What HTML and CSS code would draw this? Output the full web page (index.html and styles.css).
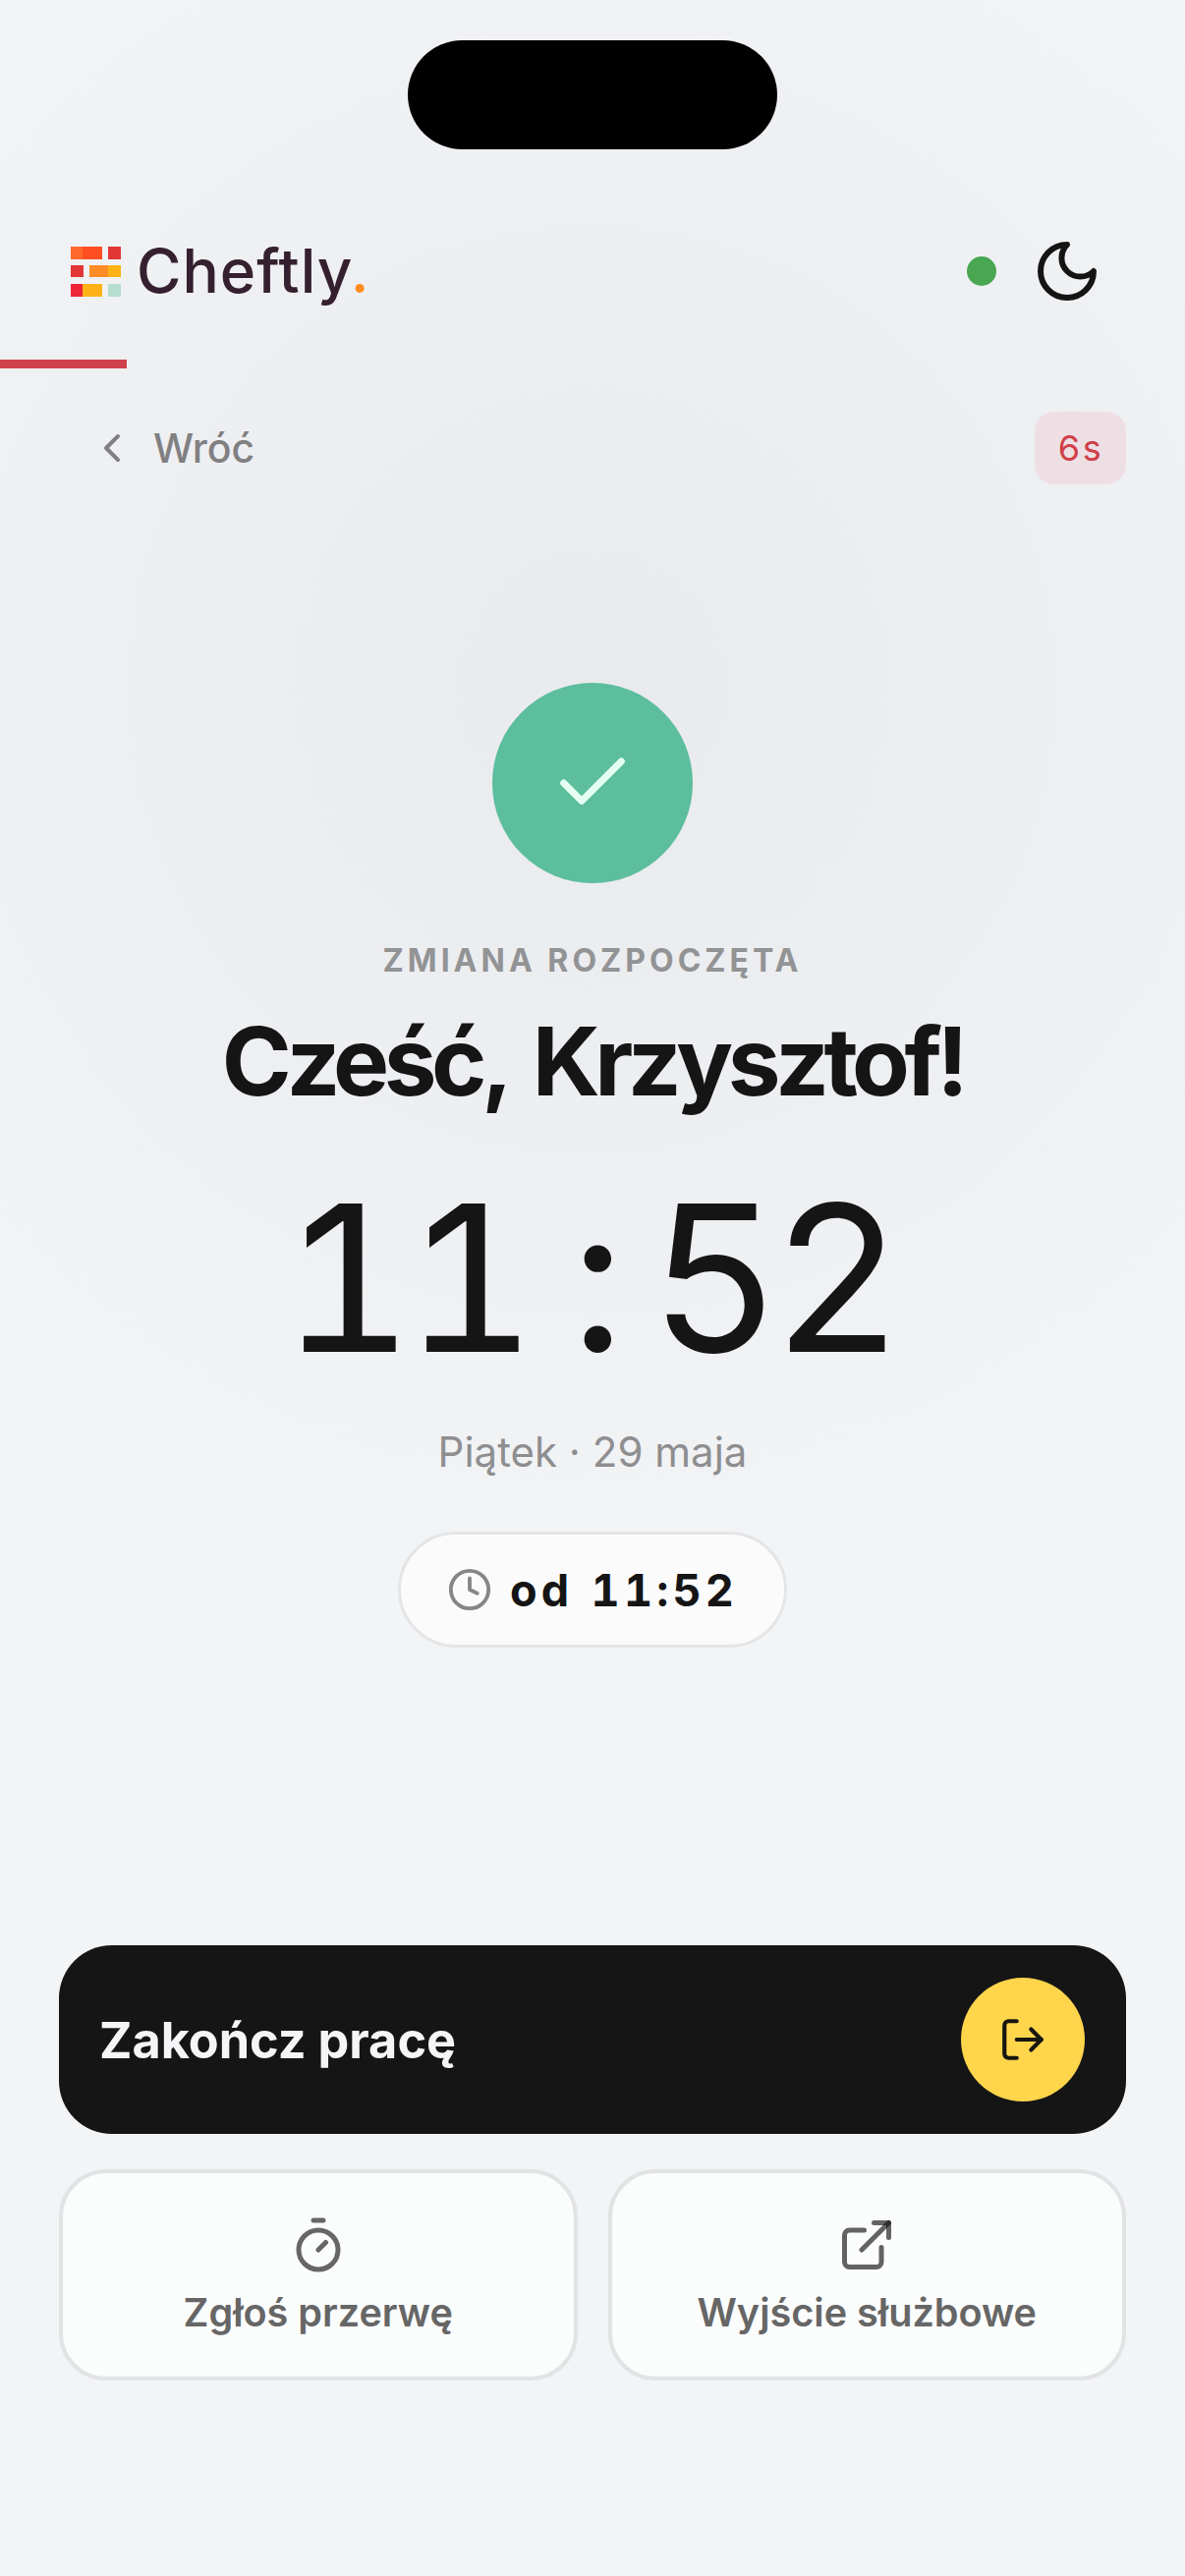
FILE: index.html
```html
<!DOCTYPE html>
<html lang="pl">
<head>
  <meta charset="utf-8">
  <title>Cheftly</title>
  <link rel="stylesheet" href="styles.css">
</head>
<body>
  <div class="page">
    <div class="island"></div>

    <!-- Logo and status -->
    <div class="topbar">
      <div class="brand">
        <svg class="brand-mark" width="51" height="51" viewBox="0 0 51 51">
          <rect x="0" y="0" width="12" height="13" fill="#ff6a2b"/>
          <rect x="12" y="0" width="20" height="13" fill="#ff4f22"/>
          <rect x="38" y="0" width="13" height="13" fill="#e23535"/>
          <rect x="0" y="19" width="13" height="12" fill="#e23535"/>
          <rect x="19" y="19" width="19" height="12" fill="#ff8c24"/>
          <rect x="38" y="19" width="13" height="12" fill="#ffb217"/>
          <rect x="0" y="38" width="12" height="13" fill="#ee2538"/>
          <rect x="12" y="38" width="20" height="13" fill="#ffb217"/>
          <rect x="38" y="38" width="13" height="13" fill="#b5decf"/>
        </svg>
        <span class="brand-name">Cheftly<span class="brand-dot">.</span></span>
      </div>
      <div class="status">
        <span class="status-dot"></span>
        <svg class="icon" width="72" height="72" viewBox="0 0 24 24" stroke="#141414" stroke-width="2">
          <path d="M12 3a6 6 0 0 0 9 9 9 9 0 1 1-9-9Z"/>
        </svg>
      </div>
    </div>

    <div class="progress"><div class="progress-fill" style="width: 129px"></div></div>

    <div class="nav-row">
      <a class="back">
        <svg class="icon" width="48" height="48" viewBox="0 0 24 24" stroke="#808082" stroke-width="2">
          <path d="m15 18-6-6 6-6"/>
        </svg>
        <span>Wróć</span>
      </a>
      <span class="countdown">6s</span>
    </div>

    <!-- Greeting -->
    <div class="hero">
      <div class="check">
        <svg class="icon" width="88" height="88" viewBox="0 0 24 24" stroke="#e6fff3" stroke-width="1.9">
          <path d="M20 6 9 17l-5-5"/>
        </svg>
      </div>
      <div class="eyebrow">ZMIANA ROZPOCZĘTA</div>
      <h1 class="greeting">Cześć, Krzysztof!</h1>
      <div class="clock">11<span class="clock-sep">:</span>52</div>
      <div class="date">Piątek · 29 maja</div>
      <div class="since">
        <svg class="icon" width="46" height="46" viewBox="0 0 24 24" stroke="#868686" stroke-width="2">
          <circle cx="12" cy="12" r="10"/>
          <path d="M12 6v6l4 2"/>
        </svg>
        <span>od 11:52</span>
      </div>
    </div>

    <!-- Actions -->
    <div class="actions">
      <button class="end-shift" type="button">
        <span>Zakończ pracę</span>
        <span class="end-icon">
          <svg class="icon" width="50" height="50" viewBox="0 0 24 24" stroke="#171510" stroke-width="2">
            <path d="M9 21H5a2 2 0 0 1-2-2V5a2 2 0 0 1 2-2h4"/>
            <path d="m16 17 5-5-5-5"/>
            <path d="M21 12H9"/>
          </svg>
        </span>
      </button>
      <div class="action-grid">
        <button class="action" type="button">
          <svg class="icon" width="60" height="60" viewBox="0 0 24 24" stroke="#666" stroke-width="2">
            <path d="M10 2h4"/>
            <path d="m12 14 3-3"/>
            <circle cx="12" cy="14" r="8"/>
          </svg>
          <span>Zgłoś przerwę</span>
        </button>
        <button class="action" type="button">
          <svg class="icon icon-layered" width="60" height="60" viewBox="0 0 24 24" stroke="#111" stroke-width="2">
            <path d="M15 3h6v6"/>
            <path d="M10 14 21 3"/>
            <path d="M18 13v6a2 2 0 0 1-2 2H5a2 2 0 0 1-2-2V8a2 2 0 0 1 2-2h6"/>
          </svg>
          <span>Wyjście służbowe</span>
        </button>
      </div>
    </div>
  </div>
</body>
</html>
```

FILE: styles.css
```css
* {
  box-sizing: border-box;
}

html, body {
  margin: 0;
  padding: 0;
}

body {
  font-family: "Inter", "Liberation Sans", sans-serif;
  color: #151515;
  background: #f3f4f6;
}

.page {
  height: 2622px;
  overflow: hidden;
  background: radial-gradient(circle at 603px 700px, #e9eaed 0, #f3f4f6 950px);
}

.icon {
  display: block;
  flex: none;
  fill: none;
  stroke-linecap: round;
  stroke-linejoin: round;
}

.icon-layered path {
  stroke-opacity: 0.65;
}

.island {
  width: 376px;
  height: 111px;
  margin: 41px auto 0;
  border-radius: 56px;
  background: #000;
}

/* Top bar */
.topbar {
  display: flex;
  align-items: center;
  justify-content: space-between;
  height: 72px;
  margin-top: 88px;
  padding: 0 84px 0 72px;
}

.brand {
  display: flex;
  align-items: center;
  gap: 16px;
}

.brand-mark {
  display: block;
}

.brand-name {
  font-size: 62px;
  font-weight: 500;
  line-height: 72px;
  letter-spacing: 1px;
  color: #35202f;
}

.brand-dot {
  color: #ff8c1e;
}

.status {
  display: flex;
  align-items: center;
  gap: 36px;
}

.status-dot {
  width: 30px;
  height: 30px;
  border-radius: 50%;
  background: #49a651;
}

.progress {
  height: 9px;
  margin-top: 54px;
}

.progress-fill {
  height: 100%;
  background: #cf424c;
}

/* Back link and countdown */
.nav-row {
  display: flex;
  align-items: center;
  justify-content: space-between;
  margin-top: 44px;
  padding: 0 60px;
}

.back {
  display: flex;
  align-items: center;
  gap: 18px;
  padding-left: 30px;
  font-size: 41px;
  font-weight: 500;
  color: #808082;
}

.countdown {
  width: 93px;
  height: 74px;
  border-radius: 20px;
  font-size: 36px;
  font-variant-numeric: tabular-nums;
  line-height: 74px;
  letter-spacing: 2px;
  text-align: center;
  color: #d03f49;
  background: #eddfe3;
}

/* Greeting */
.hero {
  display: flex;
  flex-direction: column;
  align-items: center;
  margin-top: 202px;
}

.check {
  display: flex;
  align-items: center;
  justify-content: center;
  width: 204px;
  height: 204px;
  border-radius: 50%;
  background: #5cbe9c;
}

.eyebrow {
  margin-top: 59px;
  font-size: 32px;
  font-weight: 700;
  line-height: 40px;
  letter-spacing: 4px;
  color: #929395;
}

.greeting {
  margin: 27px 0 0;
  font-size: 96px;
  font-weight: 700;
  line-height: 110px;
  letter-spacing: -5.5px;
  word-spacing: 11px;
}

.clock {
  margin-top: 65px;
  padding-right: 10px;
  font-size: 208px;
  font-weight: 400;
  font-variant-numeric: tabular-nums;
  line-height: 200px;
  letter-spacing: -10px;
}

.clock-sep {
  margin: 0 34px 0 44px;
}

.date {
  margin-top: 53px;
  font-size: 42px;
  line-height: 50px;
  color: #8e8e90;
}

.since {
  display: flex;
  align-items: center;
  justify-content: center;
  gap: 18px;
  width: 396px;
  height: 118px;
  margin-top: 56px;
  border: 3px solid #e4e5e6;
  border-radius: 59px;
  font-size: 45px;
  font-weight: 700;
  font-variant-numeric: tabular-nums;
  letter-spacing: 4.2px;
  word-spacing: 2px;
  background: #fbfbfc;
}

/* Actions */
.actions {
  margin-top: 303px;
  padding: 0 60px;
}

button {
  font-family: "Inter", sans-serif;
  font-weight: 700;
  cursor: pointer;
}

.end-shift {
  display: flex;
  align-items: center;
  justify-content: space-between;
  width: 100%;
  height: 192px;
  padding: 0 42px 0 41px;
  border: 0;
  border-radius: 54px;
  font-size: 50.4px;
  color: #f5f5f7;
  background: #151515;
}

.end-icon {
  display: flex;
  align-items: center;
  justify-content: center;
  width: 126px;
  height: 126px;
  border-radius: 50%;
  background: #ffd54c;
}

.action-grid {
  display: grid;
  grid-template-columns: 1fr 1fr;
  gap: 31px;
  margin-top: 36px;
}

.action {
  display: flex;
  flex-direction: column;
  align-items: center;
  height: 215px;
  padding-top: 43px;
  border: 4px solid #e2e3e5;
  border-radius: 48px;
  font-size: 39.6px;
  font-weight: 600;
  line-height: 50px;
  color: #666;
  background: #fbfdfd;
}

.action span {
  margin-top: 14px;
}
```
